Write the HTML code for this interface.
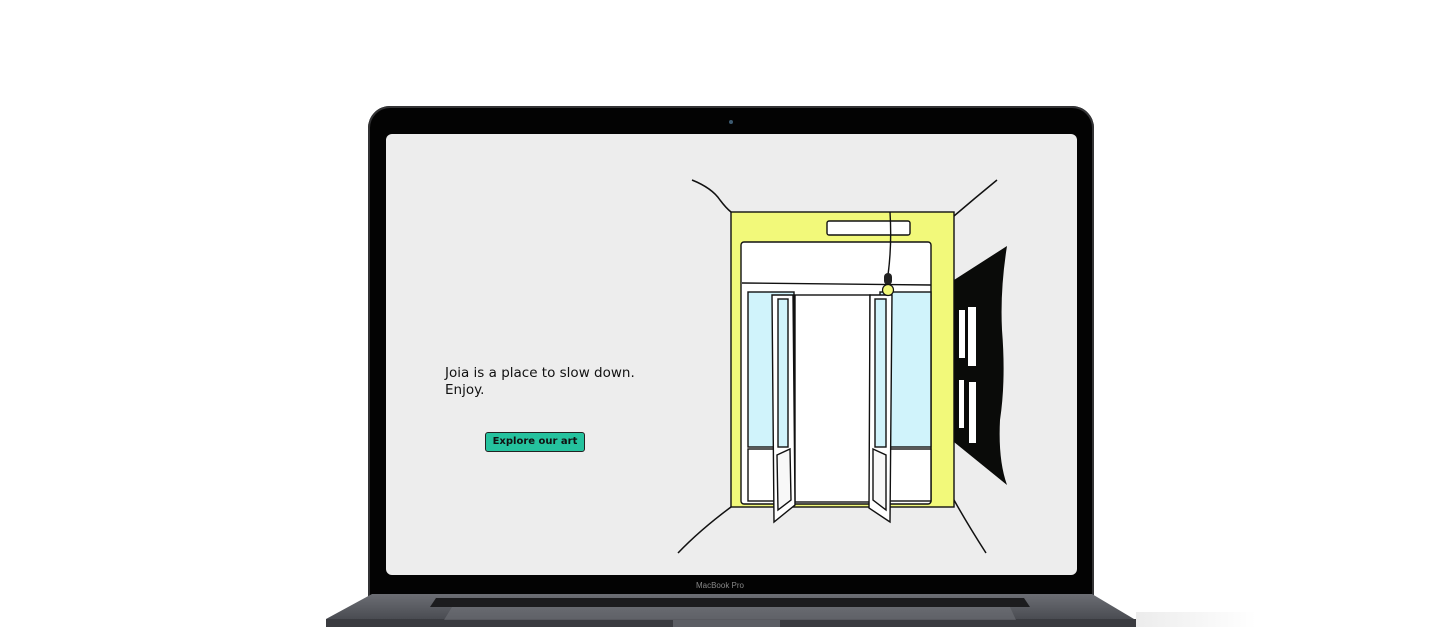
<!DOCTYPE html>
<html><head><style>
html,body{margin:0;padding:0;background:#fff;width:1440px;height:627px;overflow:hidden;position:relative;font-family:"Liberation Sans",sans-serif}
.bezel{position:absolute;left:368px;top:106px;width:726px;height:492px;background:#030303;border-radius:22px 22px 0 0;box-shadow:inset 0 0 0 2px #333335}
.screen{position:absolute;left:386px;top:134px;width:691px;height:441px;background:#ededed;border-radius:6px}
.cam{position:absolute;left:729px;top:120px;width:4px;height:4px;border-radius:50%;background:#3d5a70}
.label{position:absolute;left:0;width:1440px;top:581px;text-align:center;font-size:8px;color:#888}
.txt{position:absolute;left:445px;top:365px;line-height:17px;color:#111;font-family:"DejaVu Sans","Liberation Sans",sans-serif;font-size:13.5px}
.btn{position:absolute;left:485px;top:432px;width:98px;height:18px;background:#25c29e;border:1.3px solid #222;border-radius:3px;font-weight:bold;color:#111;text-align:center;line-height:18px;font-family:"DejaVu Sans",sans-serif;font-size:10px}
</style></head><body>
<div class="bezel"></div>
<div class="cam"></div>
<div class="screen"></div>
<div class="label">MacBook Pro</div>
<svg width="1440" height="627" style="position:absolute;left:0;top:0">
<defs><linearGradient id="g" x1="0" y1="0" x2="0" y2="1"><stop offset="0" stop-color="#6c6e74"/><stop offset="1" stop-color="#4a4c52"/></linearGradient>
<linearGradient id="sh" x1="0" x2="1"><stop offset="0" stop-color="#ececec"/><stop offset="1" stop-color="#fff"/></linearGradient></defs>
<rect x="1136" y="612" width="120" height="15" fill="url(#sh)"/>
<polygon points="372,594 1092,594 1134,619 326,619" fill="url(#g)"/>
<rect x="326" y="619" width="810" height="8" fill="#3a3b40"/>
<polygon points="436,598 1024,598 1030,607 430,607" fill="#1c1c1e"/>
<polygon points="452,607 1010,607 1016,620 444,620" fill="#75777d" opacity="0.5"/>
<rect x="673" y="620" width="107" height="7" fill="#5c5e64"/>
<g stroke="#111" stroke-width="1.5" fill="none">
<path d="M692,180 Q712,188 720,200 Q726,208 731,212"/>
<path d="M997,180 Q975,198 954,216"/>
<path d="M678,553 Q700,530 731,507"/>
<path d="M986,553 Q968,525 954,500"/>
</g>
<path d="M954,280 L1007,246 Q1000,290 1002,330 Q1006,380 1000,420 Q998,460 1007,485 L954,442 Z" fill="#0a0b09"/>
<g fill="#fff"><rect x="959" y="310" width="6" height="48"/><rect x="968" y="307" width="8" height="59"/><rect x="959" y="380" width="5" height="48"/><rect x="969" y="382" width="7" height="61"/></g>
<g stroke="#111" stroke-width="1.4">
<rect x="731" y="212" width="223" height="295" fill="#f2f97a"/>
<rect x="827" y="221" width="83" height="14" rx="2" fill="#fff"/>
<rect x="741" y="242" width="190" height="262" rx="3" fill="#fff"/>
<line x1="742" y1="283" x2="931" y2="285"/>
<rect x="748" y="292" width="46" height="155" fill="#d0f3fb"/>
<rect x="880" y="292" width="51" height="155" fill="#d0f3fb"/>
<rect x="748" y="449" width="46" height="52" fill="#fff"/>
<rect x="880" y="449" width="51" height="52" fill="#fff"/>
<rect x="795" y="295" width="75" height="207" fill="#fff"/>
<polygon points="772,295 793,295 795,505 774,522" fill="#fff"/>
<rect x="778" y="299" width="10" height="148" fill="#d0f3fb"/>
<polygon points="777,455 790,449 791,500 778,510" fill="#f8f8f8"/>
<polygon points="870,295 892,295 890,522 869,508" fill="#fff"/>
<rect x="875" y="299" width="11" height="148" fill="#d0f3fb"/>
<polygon points="873,449 886,455 886,510 873,500" fill="#f8f8f8"/>
<path d="M890,212 Q892,245 888,275" fill="none"/>
</g>
<rect x="884" y="273" width="8" height="12" rx="4" fill="#222"/>
<circle cx="888" cy="290" r="5.5" fill="#f2f97a" stroke="#111" stroke-width="1.2"/>
</svg>
<div class="txt">Joia is a place to slow down.<br>Enjoy.</div>
<div class="btn">Explore our art</div>
</body></html>
